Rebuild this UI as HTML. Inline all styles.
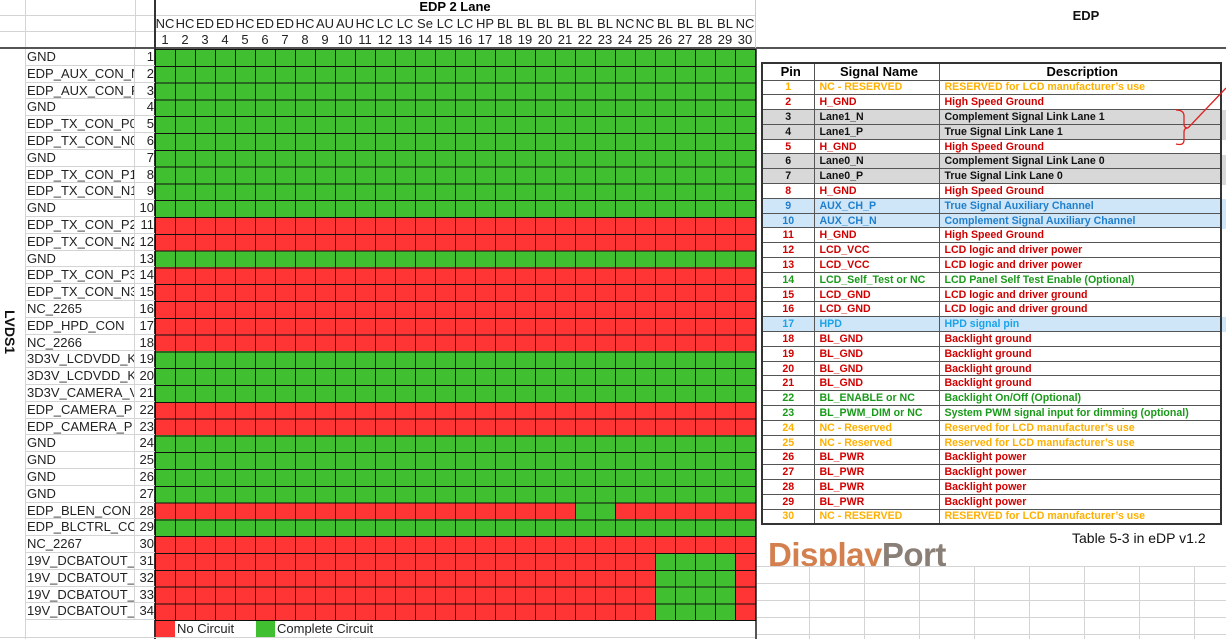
<!DOCTYPE html>
<html><head><meta charset="utf-8"><style>
*{margin:0;padding:0;box-sizing:border-box}
body{width:1226px;height:639px;overflow:hidden;background:#fff;position:relative;font-family:"Liberation Sans",Arial,sans-serif}
.abs{position:absolute}
.lbl{position:absolute;left:25px;width:130px;display:flex;font-size:13px;color:#222;border-bottom:1px solid #d4d4d4}
.lbl .n{width:110px;padding-left:2px;white-space:nowrap;overflow:hidden;border-right:1px solid #d4d4d4;line-height:16px}
.lbl .i{width:20px;text-align:right;padding-right:1px;line-height:16px}
.row{position:absolute;left:155px;width:600px}
.R{background:#ff3535}.G{background:#40bf30}
.hc{position:absolute;font-size:13px;color:#222;text-align:center;width:20px;overflow:hidden;white-space:nowrap}
table.t{position:absolute;left:761px;top:62px;width:461px;height:463px;border-collapse:collapse;border:2px solid #333;font-size:10.6px;font-weight:bold}
table.t td,table.t th{border:1px solid #555;height:14.8px;line-height:12px;padding:0 0 0 5px;white-space:nowrap;overflow:hidden}
table.t th{font-size:13px;text-align:center;color:#000;height:17px}
table.t td.p{text-align:center;padding:0}
.o{color:#ffb000}.r{color:#d00000}.k{color:#111}.b{color:#1f7fcc}.lb{color:#19a3ea}.g{color:#1a9a1a}
.gr{background:#d8d8d8}.bl{background:#cfe6f8}
</style></head><body>

<div class="abs" style="left:25px;top:0;width:1px;height:639px;background:#d4d4d4"></div>
<div class="abs" style="left:135px;top:0;width:1px;height:49px;background:#d4d4d4"></div>
<div class="abs" style="left:0;top:15px;width:155px;height:1px;background:#d4d4d4"></div>
<div class="abs" style="left:0;top:31px;width:755px;height:1px;background:#d4d4d4"></div>
<div class="abs" style="left:155px;top:15px;width:600px;height:1px;background:#d4d4d4"></div>
<div class="abs" style="left:0;top:47px;width:1226px;height:2px;background:#555"></div>
<div class="abs" style="left:154px;top:0;width:2px;height:639px;background:#333"></div>
<div class="abs" style="left:755px;top:0;width:1px;height:48px;background:#ccc"></div>
<div class="abs" style="left:755px;top:48px;width:2px;height:591px;background:#555"></div>
<div class="abs" style="left:0;top:637px;width:755px;height:1px;background:#d4d4d4"></div>

<div class="abs" style="left:155px;top:0;width:600px;text-align:center;font-size:13px;font-weight:bold;line-height:14px">EDP 2 Lane</div>
<div class="abs" style="left:1070px;top:8px;width:32px;text-align:center;font-size:13px;font-weight:bold;color:#111">EDP</div>

<div class="abs" style="left:2px;top:310px;writing-mode:vertical-rl;font-size:14px;font-weight:bold;color:#111">LVDS1</div>

<div id="hdr"></div>
<div id="lbls"></div>
<div id="grid"></div>

<div class="abs" style="left:155px;top:49px;width:601px;height:572px;background-image:repeating-linear-gradient(to right,#111 0 1px,transparent 1px 20px),repeating-linear-gradient(to bottom,#111 0 1px,transparent 1px 16.8px)"></div>

<div class="abs R" style="left:156px;top:621px;width:19px;height:16px"></div>
<div class="abs" style="left:177px;top:621px;font-size:13px;color:#222">No Circuit</div>
<div class="abs G" style="left:256px;top:621px;width:19px;height:16px"></div>
<div class="abs" style="left:277px;top:621px;font-size:13px;color:#222">Complete Circuit</div>

<div class="abs gr" style="left:1222px;top:110px;width:4px;height:30px"></div>
<div class="abs gr" style="left:1222px;top:155px;width:4px;height:30px"></div>
<div class="abs bl" style="left:1222px;top:199px;width:4px;height:30px"></div>
<div class="abs bl" style="left:1222px;top:317px;width:4px;height:15px"></div>

<table class="t">
<tr><th>Pin</th><th>Signal Name</th><th>Description</th></tr>
<tr class="o"><td class="p">1</td><td>NC - RESERVED</td><td>RESERVED for LCD manufacturer’s use</td></tr>
<tr class="r"><td class="p">2</td><td>H_GND</td><td>High Speed Ground</td></tr>
<tr class="k gr"><td class="p">3</td><td>Lane1_N</td><td>Complement Signal Link Lane 1</td></tr>
<tr class="k gr"><td class="p">4</td><td>Lane1_P</td><td>True Signal Link Lane 1</td></tr>
<tr class="r"><td class="p">5</td><td>H_GND</td><td>High Speed Ground</td></tr>
<tr class="k gr"><td class="p">6</td><td>Lane0_N</td><td>Complement Signal Link Lane 0</td></tr>
<tr class="k gr"><td class="p">7</td><td>Lane0_P</td><td>True Signal Link Lane 0</td></tr>
<tr class="r"><td class="p">8</td><td>H_GND</td><td>High Speed Ground</td></tr>
<tr class="b bl"><td class="p">9</td><td>AUX_CH_P</td><td>True Signal Auxiliary Channel</td></tr>
<tr class="b bl"><td class="p">10</td><td>AUX_CH_N</td><td>Complement Signal Auxiliary Channel</td></tr>
<tr class="r"><td class="p">11</td><td>H_GND</td><td>High Speed Ground</td></tr>
<tr class="r"><td class="p">12</td><td>LCD_VCC</td><td>LCD logic and driver power</td></tr>
<tr class="r"><td class="p">13</td><td>LCD_VCC</td><td>LCD logic and driver power</td></tr>
<tr class="g"><td class="p">14</td><td>LCD_Self_Test or NC</td><td>LCD Panel Self Test Enable (Optional)</td></tr>
<tr class="r"><td class="p">15</td><td>LCD_GND</td><td>LCD logic and driver ground</td></tr>
<tr class="r"><td class="p">16</td><td>LCD_GND</td><td>LCD logic and driver ground</td></tr>
<tr class="lb bl"><td class="p">17</td><td>HPD</td><td>HPD signal pin</td></tr>
<tr class="r"><td class="p">18</td><td>BL_GND</td><td>Backlight ground</td></tr>
<tr class="r"><td class="p">19</td><td>BL_GND</td><td>Backlight ground</td></tr>
<tr class="r"><td class="p">20</td><td>BL_GND</td><td>Backlight ground</td></tr>
<tr class="r"><td class="p">21</td><td>BL_GND</td><td>Backlight ground</td></tr>
<tr class="g"><td class="p">22</td><td>BL_ENABLE or NC</td><td>Backlight On/Off (Optional)</td></tr>
<tr class="g"><td class="p">23</td><td>BL_PWM_DIM or NC</td><td>System PWM signal input for dimming (optional)</td></tr>
<tr class="o"><td class="p">24</td><td>NC - Reserved</td><td>Reserved for LCD manufacturer’s use</td></tr>
<tr class="o"><td class="p">25</td><td>NC - Reserved</td><td>Reserved for LCD manufacturer’s use</td></tr>
<tr class="r"><td class="p">26</td><td>BL_PWR</td><td>Backlight power</td></tr>
<tr class="r"><td class="p">27</td><td>BL_PWR</td><td>Backlight power</td></tr>
<tr class="r"><td class="p">28</td><td>BL_PWR</td><td>Backlight power</td></tr>
<tr class="r"><td class="p">29</td><td>BL_PWR</td><td>Backlight power</td></tr>
<tr class="o"><td class="p">30</td><td>NC - RESERVED</td><td>RESERVED for LCD manufacturer’s use</td></tr>
</table>
<style>table.t tr td:first-child{width:52px}table.t tr td:nth-child(2){width:125px}</style>

<svg class="abs" style="left:1160px;top:80px" width="66" height="70"><path d="M16 30 Q24 30 24 36 L24 44 Q24 48 28 48 Q24 48 24 52 L24 60 Q24 66 16 64" fill="none" stroke="#d22" stroke-width="1.3"/><path d="M28 48 L66 8" stroke="#d22" stroke-width="1.3"/></svg>

<div class="abs" style="left:1072px;top:530px;font-size:14px;color:#111">Table 5-3 in eDP v1.2</div>
<div class="abs" style="left:757px;top:536px;width:200px;height:31px;overflow:hidden"><div style="font-size:33px;font-weight:bold;line-height:38px;margin-left:11px;letter-spacing:-0.5px"><span style="color:#d4804e">Display</span><span style="color:#8a7f76">Port</span></div></div>

<div class="abs" style="left:757px;top:566px;width:469px;height:73px;background-image:repeating-linear-gradient(to bottom,#d4d4d4 0 1px,transparent 1px 17px),repeating-linear-gradient(to right,transparent 0 52px,#d4d4d4 52px 53px,transparent 53px 55px)"></div>

<script>
var names="NC HC ED ED HC ED ED HC AU AU HC LC LC Se LC LC HP BL BL BL BL BL BL NC NC BL BL BL BL NC".split(" ");
var h="";
for(var i=0;i<30;i++){h+='<div class="hc" style="left:'+(155+i*20)+'px;top:16px">'+names[i]+'</div><div class="hc" style="left:'+(155+i*20)+'px;top:32px">'+(i+1)+'</div>';}
document.getElementById("hdr").innerHTML=h;
var L=["GND","EDP_AUX_CON_N","EDP_AUX_CON_P","GND","EDP_TX_CON_P0","EDP_TX_CON_N0","GND","EDP_TX_CON_P1","EDP_TX_CON_N1","GND","EDP_TX_CON_P2","EDP_TX_CON_N2","GND","EDP_TX_CON_P3","EDP_TX_CON_N3","NC_2265","EDP_HPD_CON","NC_2266","3D3V_LCDVDD_K","3D3V_LCDVDD_K","3D3V_CAMERA_V","EDP_CAMERA_P","EDP_CAMERA_P","GND","GND","GND","GND","EDP_BLEN_CON","EDP_BLCTRL_CO","NC_2267","19V_DCBATOUT_","19V_DCBATOUT_","19V_DCBATOUT_","19V_DCBATOUT_"];
var red=[11,12,14,15,16,17,18,22,23,28,30,31,32,33,34];
var a="",g="";
for(var r=1;r<=34;r++){var t=49+(r-1)*16.8;
a+='<div class="lbl" style="top:'+t+'px;height:16.8px"><div class="n">'+L[r-1]+'</div><div class="i">'+r+'</div></div>';
g+='<div class="row '+(red.indexOf(r)>=0?'R':'G')+'" style="top:'+t+'px;height:16.8px"></div>';
if(r==28)g+='<div class="row G" style="left:575px;width:40px;top:'+t+'px;height:16.8px"></div>';
if(r>=31)g+='<div class="row G" style="left:655px;width:80px;top:'+t+'px;height:16.8px"></div>';}
document.getElementById("lbls").innerHTML=a;document.getElementById("grid").innerHTML=g;
</script>
</body></html>
